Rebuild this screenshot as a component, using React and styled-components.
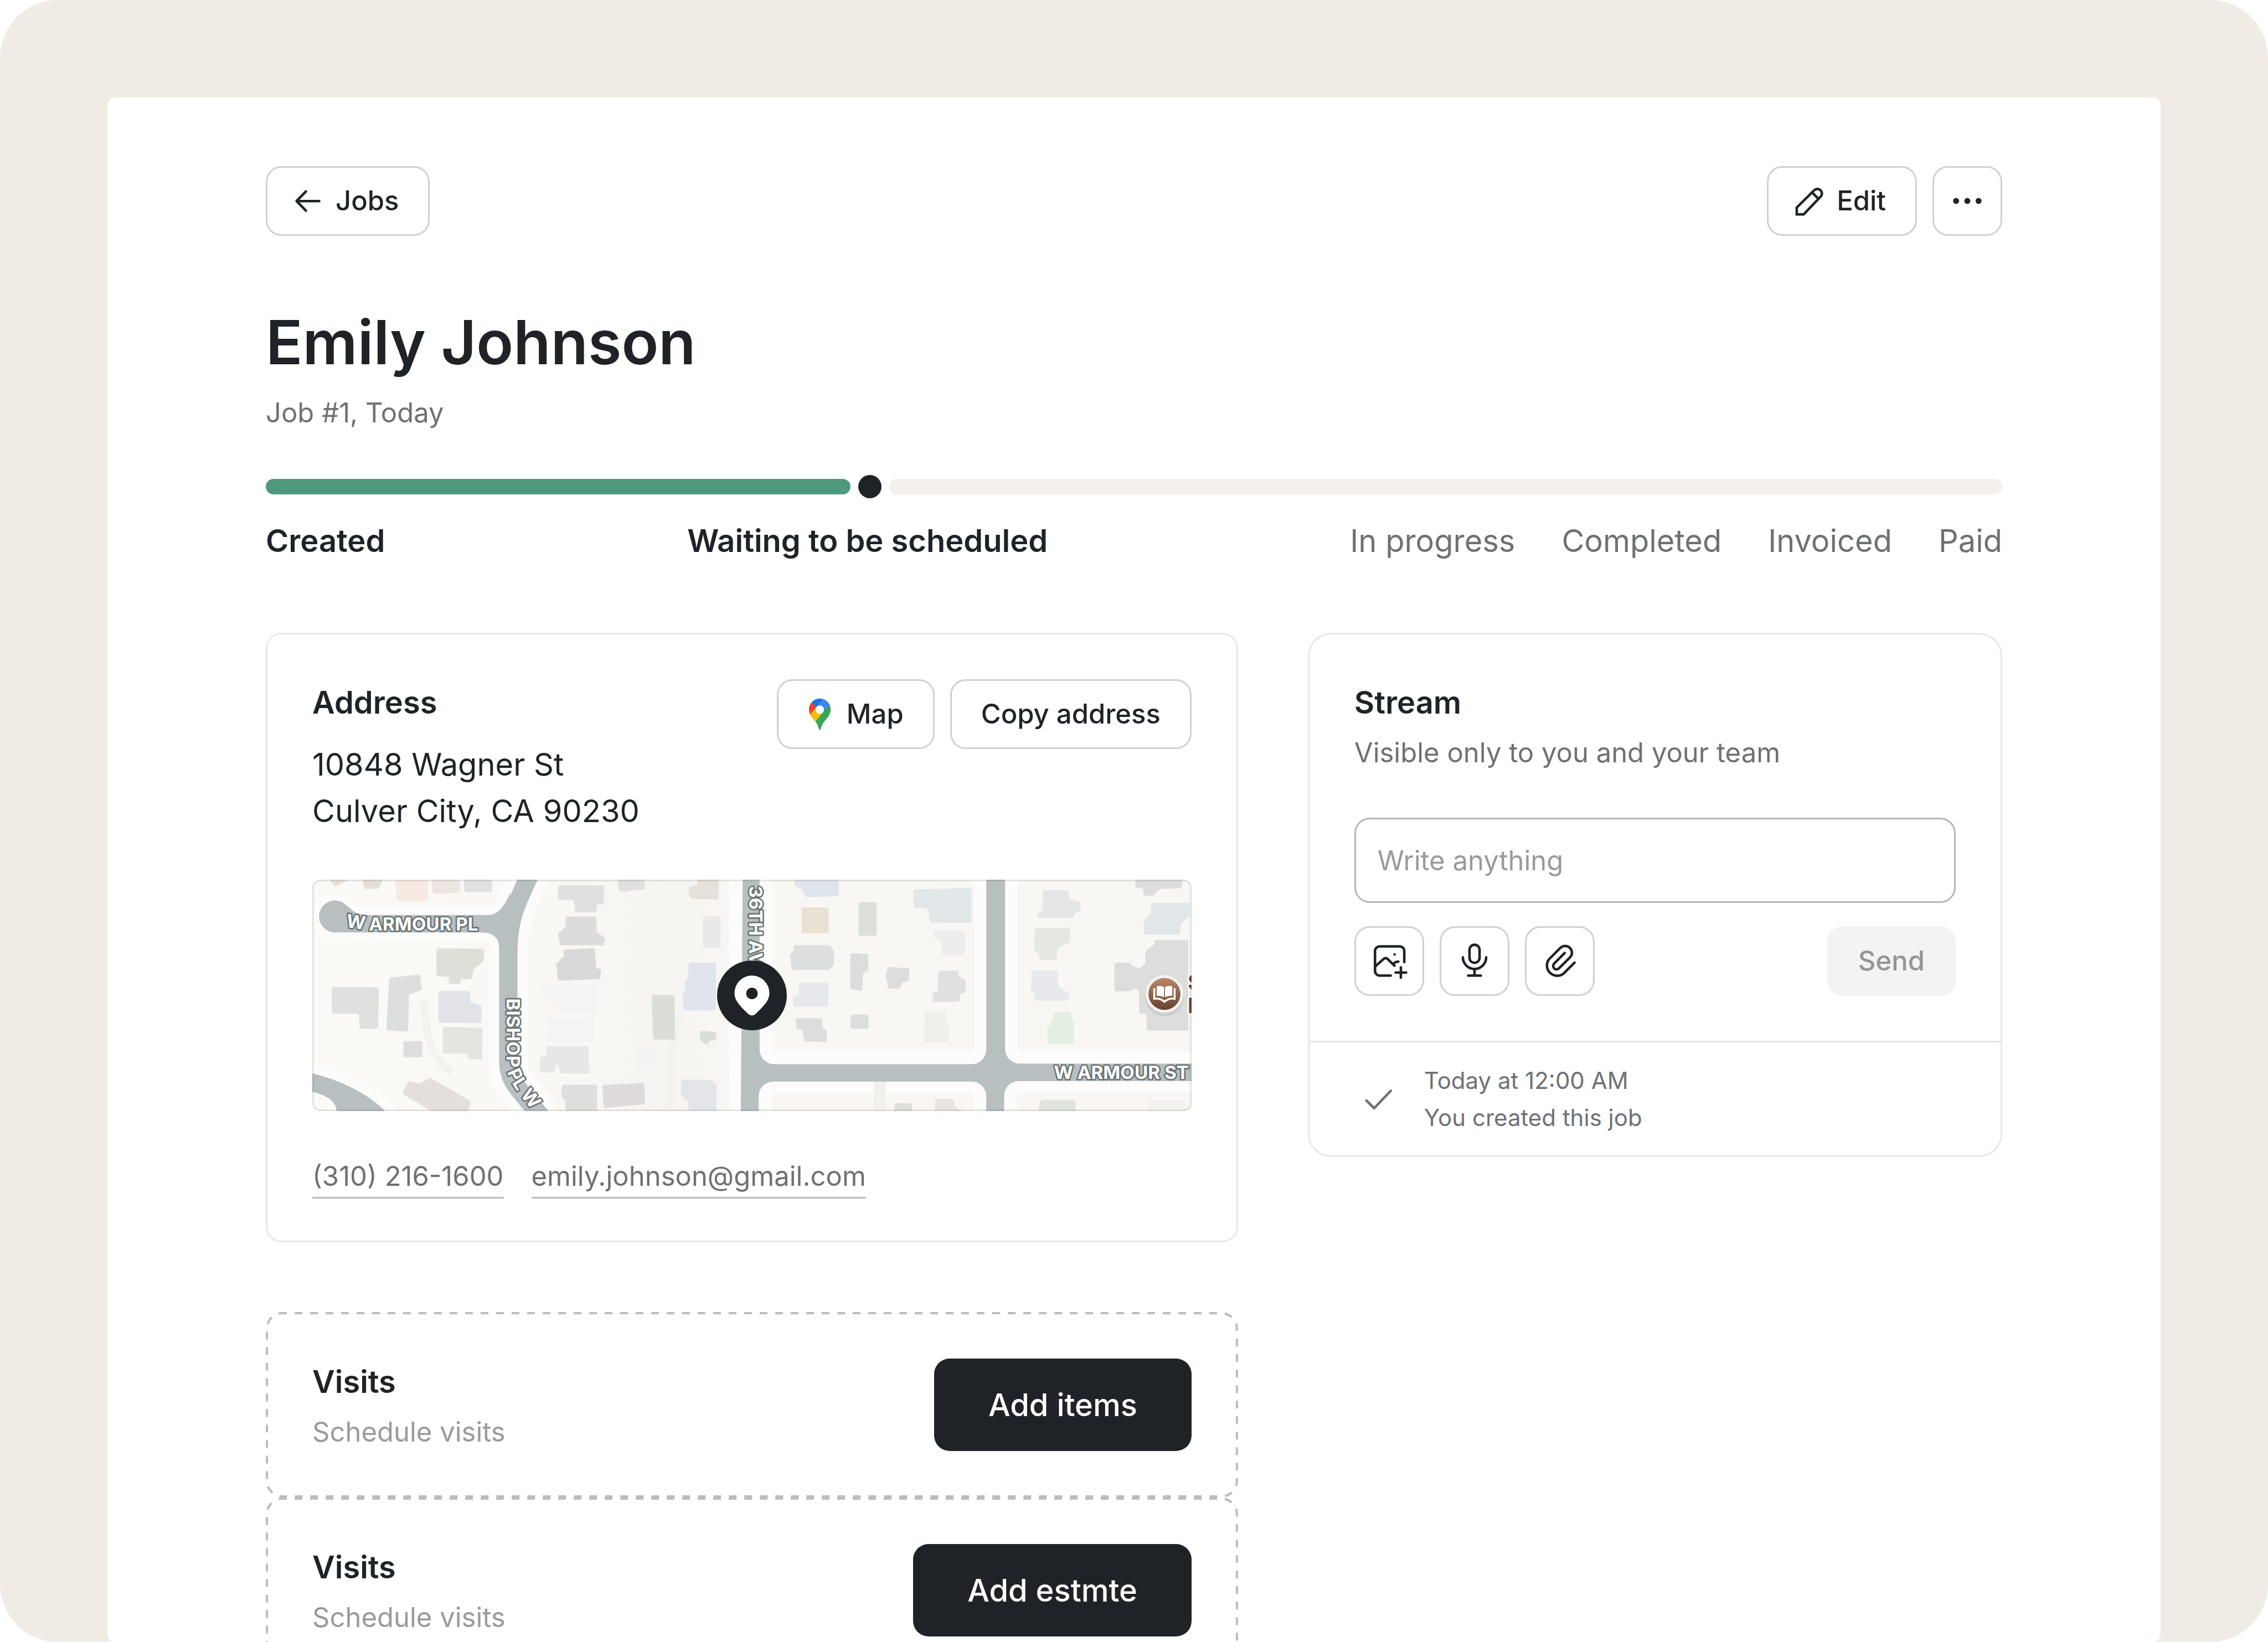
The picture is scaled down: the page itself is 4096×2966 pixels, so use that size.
import React, { useState } from 'react';
import styled, { createGlobalStyle } from 'styled-components';

const GlobalStyle = createGlobalStyle`
  * {
    box-sizing: border-box;
  }

  body {
    margin: 0;
    background: #ffffff;
    color: #1f2227;
    font-family: Inter, "Liberation Sans", sans-serif;
    font-size: 49px;
    line-height: 70px;
  }

  h1, h2, p, address, ol {
    margin: 0;
    padding: 0;
  }

  button, input {
    font: inherit;
    color: inherit;
  }
`;

const Frame = styled.div`
  display: flex;
  height: 100vh;
  padding: 176px 194px 0;
  overflow: hidden;
  background: #f0ebe4;
  border-radius: 105px;
`;

const Panel = styled.main`
  flex: 1;
  min-width: 0;
  padding: 124px 286px 0;
  overflow: hidden;
  background: #ffffff;
  border-radius: 14px;
`;

const Toolbar = styled.div`
  display: flex;
  align-items: center;
  justify-content: space-between;
`;

const Actions = styled.div`
  display: flex;
  gap: 28px;
`;

const Button = styled.button`
  display: flex;
  align-items: center;
  justify-content: center;
  gap: 14px;
  height: 126px;
  padding: 0 53px 0 ${props => (props.$icon ? '39px' : '53px')};
  background: #ffffff;
  border: 3px solid #cfd0d0;
  border-radius: 28px;
  font-weight: 500;
  white-space: nowrap;
  cursor: pointer;
`;

const IconButton = styled(Button)`
  width: 126px;
  padding: 0;
`;

const SendButton = styled(Button)`
  background: #f3f3f3;
  border-color: #f3f3f3;
  color: #959595;
`;

const PrimaryButton = styled.button`
  height: 167px;
  padding: 0 98px;
  background: #1f2227;
  border: 0;
  border-radius: 28px;
  color: #ffffff;
  font-size: 56px;
  font-weight: 500;
  white-space: nowrap;
  cursor: pointer;
`;

const Icon = styled.svg`
  flex: none;
  width: 70px;
  height: 70px;
  fill: none;
  stroke: currentColor;
  stroke-width: 1.3;
  stroke-linecap: round;
  stroke-linejoin: round;
`;

const Title = styled.h1`
  margin-top: 122px;
  font-size: 110px;
  font-weight: 600;
  line-height: 140px;
`;

const Subtitle = styled.p`
  margin-top: 23px;
  color: #6f7074;
`;

const Progress = styled.div`
  display: flex;
  align-items: center;
  gap: 14px;
  margin-top: 77px;
`;

const Bar = styled.div`
  flex: ${props => props.$share} 1 0;
  height: 28px;
  background: ${props => (props.$done ? '#4f9a7c' : '#f4f1ea')};
  border-radius: 14px;
`;

const Dot = styled.div`
  width: 42px;
  height: 42px;
  background: #1f2227;
  border-radius: 50%;
`;

const Steps = styled.ol`
  display: flex;
  justify-content: space-between;
  margin-top: 35px;
  list-style: none;
  font-size: 56px;
  line-height: 84px;
`;

const Step = styled.li`
  display: flex;
  gap: 84px;
  font-weight: ${props => (props.$active ? 600 : 400)};
  color: ${props => (props.$active ? '#1f2227' : '#6f7074')};
`;

const Columns = styled.div`
  display: grid;
  grid-template-columns: 7fr 5fr;
  align-items: start;
  gap: 126px;
  margin-top: 124px;
`;

const Card = styled.section`
  border: 3px solid #e8e8e8;
  border-radius: 28px;
  padding: 81px;
`;

const StreamCard = styled(Card)`
  border-radius: 42px;
  padding: 0;
`;

const CardHeader = styled.div`
  display: flex;
  align-items: flex-start;
  justify-content: space-between;
`;

const CardTitle = styled.h2`
  font-size: 56px;
  font-weight: 600;
  line-height: 84px;
`;

const Address = styled.address`
  margin-top: 28px;
  font-size: 56px;
  font-style: normal;
  line-height: 84px;
`;

const Muted = styled.p`
  margin-top: 14px;
  color: ${props => (props.$light ? '#9a9a9a' : '#6f7074')};
`;

const MapBox = styled.div`
  position: relative;
  height: 418px;
  margin-top: 82px;
  overflow: hidden;
  border-radius: 14px;

  &::after {
    content: "";
    position: absolute;
    inset: 0;
    border: 3px solid rgba(60, 60, 50, 0.12);
    border-radius: 14px;
  }
`;

const MapSvg = styled.svg`
  display: block;
  width: 100%;
  height: 100%;
`;

const Marker = styled.svg`
  position: absolute;
  top: 50%;
  left: 50%;
  width: 126px;
  height: 126px;
  transform: translate(-50%, -50%);
`;

const RoadLabel = styled.text`
  fill: #ffffff;
  stroke: #6a7376;
  stroke-width: 6;
  stroke-linejoin: round;
  paint-order: stroke;
  font-size: 38px;
  font-weight: 700;
`;

const PlaceLabel = styled(RoadLabel)`
  fill: #6b4138;
  stroke: #ffffff;
  font-size: 44px;
`;

const Contacts = styled.p`
  margin-top: 83px;
`;

const ContactLink = styled.a`
  margin-right: 50px;
  padding-bottom: 8px;
  border-bottom: 3px solid #b9b9b9;
  color: #6f7074;
  text-decoration: none;
`;

const Todos = styled.div`
  margin-top: 126px;
`;

const TodoCard = styled.section`
  position: relative;
  display: flex;
  align-items: flex-start;
  justify-content: space-between;
  height: 335px;
  padding: 84px;
`;

const Dashes = styled.svg`
  position: absolute;
  inset: 0;
  width: 100%;
  height: 100%;
  padding: 2px;
  overflow: visible;
  pointer-events: none;

  rect {
    width: 100%;
    height: 100%;
    fill: none;
    stroke: #bcbcbc;
    stroke-width: 4;
    stroke-dasharray: 14 14;
    stroke-dashoffset: 6;
  }
`;

const Composer = styled.form`
  padding: 81px;
`;

const Field = styled.input`
  display: block;
  width: 100%;
  height: 154px;
  margin-top: 82px;
  padding: 0 39px;
  background: #ffffff;
  border: 3px solid #b5b5b5;
  border-radius: 28px;

  &::placeholder {
    color: #9a9a9a;
    opacity: 1;
  }
`;

const ComposerActions = styled.div`
  display: flex;
  justify-content: space-between;
  margin-top: 42px;
`;

const StreamItem = styled.div`
  display: flex;
  align-items: center;
  gap: 42px;
  padding: 35px 81px;
  border-top: 3px solid #e3e3e3;
  color: #6f7074;
  font-size: 42px;
  line-height: 67px;
`;

const CheckIcon = styled(Icon)`
  width: 84px;
  height: 84px;
`;

const ArrowIcon = () => (
  <Icon viewBox="0 0 20 20" aria-hidden="true">
    <path d="M15.6 10.05H3.9M8.7 5.1L3.9 10.05L8.7 15" />
  </Icon>
);

const PencilIcon = () => (
  <Icon viewBox="0 0 20 20" aria-hidden="true">
    <path d="M3.4 16.9V13.4L12.4 4.5A2.33 2.33 0 0 1 15.7 7.8L7 16.9Z" strokeLinejoin="miter" />
    <path d="M11.3 5.6L14.6 8.9" />
  </Icon>
);

const MoreIcon = () => (
  <Icon viewBox="0 0 20 20" aria-hidden="true">
    <g fill="currentColor" stroke="none">
      <circle cx="4.2" cy="10" r="1.55" />
      <circle cx="10" cy="10" r="1.55" />
      <circle cx="15.8" cy="10" r="1.55" />
    </g>
  </Icon>
);

const ImageIcon = () => (
  <Icon viewBox="0 0 20 20" aria-hidden="true">
    <path d="M10.75 17.5H5.1A2.45 2.45 0 0 1 2.65 15.05V4.85A2.45 2.45 0 0 1 5.1 2.4H15.3A2.45 2.45 0 0 1 17.75 4.85V10.5" />
    <path d="M2.65 12.9L7.1 8.9Q8.1 8 9.1 8.9L12.7 12.4" />
    <path d="M12 11.7Q13 10.3 14.7 10.3" />
    <path d="M16 13.2V18.6M13.3 15.9H18.7" />
    <circle cx="12.75" cy="6.6" r="0.65" fill="currentColor" stroke="none" />
  </Icon>
);

const MicIcon = () => (
  <Icon viewBox="0 0 20 20" aria-hidden="true">
    <rect x="7.4" y="1.6" width="5.2" height="9.3" rx="2.6" />
    <path d="M4 8.1A6 6 0 0 0 16 8.1M10 14.1V17.5M6.7 17.5H13.3" />
  </Icon>
);

const ClipIcon = () => (
  <Icon viewBox="0 0 20 20" aria-hidden="true">
    <path d="M17.6 10.8L12 16.4A5.3 5.3 0 0 1 4.5 9L10.3 3.2A3.5 3.5 0 0 1 15.2 8.2L9.4 13.9A1.75 1.75 0 0 1 6.9 11.5L12.5 5.8" />
  </Icon>
);

const GooglePin = () => (
  <Icon viewBox="50 58 240 240" aria-hidden="true">
    <clipPath id="gpin">
      <path d="M172 82A67 67 0 0 1 239 149C239 172 228 190 214 207C200 222 187 238 180 262C177 272 176 276 172 276C168 276 167 272 164 262C158 243 150 231 140 217C124 198 105 178 105 149A67 67 0 0 1 172 82Z" />
    </clipPath>
    <g clipPath="url(#gpin)" stroke="none">
      <path fill="#34a853" d="M90 70H260V290H90Z" />
      <path fill="#fbbc04" d="M90 207L152 133L191 168L144 224L90 288Z" />
      <path fill="#ea4335" d="M80 72L152 133L90 207Z" />
      <path fill="#1a73e8" d="M80 72H200L152 133Z" />
      <path fill="#4285f4" d="M200 76H269L191 168L152 133Z" />
    </g>
    <circle cx="172" cy="150" r="26" fill="#ffffff" stroke="none" />
  </Icon>
);

const westBuildings = [
  ['#e8e2d6', '92,60 142,60 104,98'],
  ['#e5dfd8', '198,50 255,50 240,112 204,112'],
  ['#f6eae1', '304,50 398,50 396,188 312,188'],
  ['#ede5e0', '423,50 501,50 501,138 426,142'],
  ['#e1e1e1', '527,50 605,50 605,133 530,133'],
  ['#dfded9', '439,510 578,512 578,570 545,620 541,674 503,676 503,704 479,704 479,662 439,655'],
  ['#dcdfdb', '286,692 372,675 377,745 336,775 333,1000 277,995'],
  ['#e0e0e1', '100,750 239,752 236,983 190,983 188,905 178,890 100,890'],
  ['#e1e3e8', '445,775 533,775 536,840 571,865 571,948 445,945'],
  ['#e5e4e0', '460,1000 574,1004 572,1174 540,1172 536,1138 460,1138'],
  ['#dededd', '332,1087 379,1087 379,1159 332,1159'],
  ['#e4dfdc', '345,1338 378,1352 412,1318 535,1455 525,1520 430,1510 330,1395'],
  ['#e1e0df', '833,118 967,118 967,208 945,210 943,258 887,258 885,200 875,182 833,180'],
  ['#dcdcdb', '858,312 942,312 944,400 970,440 968,464 838,464 833,410 858,365'],
  ['#dad9d9', '850,518 938,510 942,625 958,640 956,675 832,684 827,600 852,550'],
  ['#f4f4f2', '778,730 950,735 946,890 838,885 832,820 785,815'],
  ['#f4f4f2', '803,940 938,940 936,1070 796,1070'],
  ['#e7e7e5', '795,1118 918,1118 920,1262 838,1262 834,1210 810,1210 808,1255 773,1255 773,1185 795,1180'],
  ['#dededc', '845,1358 945,1358 945,1520 858,1520 855,1430 843,1415'],
  ['#dfdadb', '976,1360 1098,1348 1100,1455 980,1475'],
  ['#e0e0e0', '1024,50 1099,50 1099,118 1062,120 1055,130 1030,128'],
  ['#e6e0da', '1285,50 1339,50 1338,178 1262,176 1254,150 1256,125 1282,115'],
  ['#e9e9e9', '1302,312 1345,312 1344,480 1302,480'],
  ['#e0e4ec', '1255,600 1329,600 1329,868 1238,870 1236,775 1244,770 1244,705 1252,700'],
  ['#dbddd9', '1136,800 1195,800 1198,1050 1140,1050'],
  ['#dbddd9', '1292,1025 1330,1030 1330,1055 1310,1060 1306,1080 1292,1060'],
  ['#f3f3f2', '1086,1135 1133,1135 1133,1237 1086,1230'],
  ['#e3e5e8', '1232,1325 1320,1330 1331,1350 1331,1520 1255,1520 1252,1440 1230,1400'],
];

const eastBuildings = [
  ['#dde4eb', '235,50 363,50 363,158 268,164 258,120 235,95'],
  ['#eae1d5', '257,255 331,255 331,388 257,388'],
  ['#dddfdb', '442,222 486,222 486,404 442,404'],
  ['#e2e7e9', '620,143 793,135 793,324 672,326 665,250 650,232 620,232'],
  ['#ededeb', '686,400 770,400 776,470 768,527 712,525 705,430 686,420'],
  ['#dddee0', '232,490 338,490 348,520 348,595 335,618 225,618 220,540 232,520'],
  ['#dbdfdb', '415,540 459,545 459,625 443,640 440,745 415,740'],
  ['#dddddc', '535,628 592,632 590,690 570,700 563,735 537,732 530,670'],
  ['#e0e0e1', '700,650 750,650 752,680 775,700 774,760 758,775 755,815 682,815 682,785 698,770'],
  ['#e6e8ec', '250,725 330,725 330,848 230,846 228,805 248,795'],
  ['#dddddc', '238,945 310,945 313,1010 325,1015 324,1064 266,1062 260,1000 240,985'],
  ['#dbdfdb', '416,922 460,922 460,984 416,984'],
  ['#efefeb', '655,902 710,902 715,980 722,990 718,1068 653,1068'],
  ['#e5e6e8', '1038,147 1107,147 1112,200 1146,220 1146,258 1126,265 1125,293 1022,295 1022,285 1038,270'],
  ['#e5e7e2', '1012,385 1112,380 1112,450 1072,490 1068,556 1028,555 1022,510 1010,505'],
  ['#e7e9ec', '1002,645 1072,645 1074,740 1110,785 1105,808 1012,808 1010,765 1000,755'],
  ['#e2efe2', '1075,905 1115,905 1118,945 1125,955 1125,1078 1055,1078 1052,1000 1062,985'],
  ['#dddddc', '1338,50 1477,50 1474,110 1408,112 1385,155 1364,155 1362,112 1338,105'],
  ['#e1e6e8', '1390,227 1500,227 1500,290 1472,330 1468,398 1365,398 1365,330 1388,290'],
  ['#dddddb', '1400,458 1495,460 1495,995 1375,995 1372,895 1350,890 1350,765 1335,730 1310,750 1270,750 1270,600 1310,600 1318,620 1345,635 1370,600 1370,520 1398,480'],
  ['#e1e3de', '1030,1452 1130,1452 1130,1540 1020,1540'],
  ['#f1f1f0', '1382,1455 1485,1455 1488,1540 1380,1540'],
  ['#dfdfde', '558,1475 600,1475 602,1540 558,1540'],
  ['#e9e4e1', '690,1448 735,1448 740,1490 765,1520 690,1520'],
];

const Buildings = ({ list, transform }) => (
  <g transform={transform}>
    {list.map(([color, points]) => (
      <polygon
        key={points}
        points={points}
        fill={color}
        stroke={color}
        strokeWidth="8"
        strokeLinejoin="round"
        vectorEffect="non-scaling-stroke"
      />
    ))}
  </g>
);

const bishop = 'M452 -10C428 45 408 75 408 150V375C408 420 430 430 476 490';

const StreetMap = () => (
  <MapSvg viewBox="0 0 1822 478" preserveAspectRatio="xMidYMid slice" role="img" aria-label="Map of the address">
    <defs>
      <linearGradient id="poi" x1="0" y1="0" x2="0" y2="1">
        <stop offset="0" stopColor="#bd8765" />
        <stop offset="1" stopColor="#654330" />
      </linearGradient>
      <linearGradient id="ground" x1="0" y1="0" x2="1" y2="0">
        <stop offset="0" stopColor="#fbfaf6" />
        <stop offset="0.65" stopColor="#f8f7f3" />
        <stop offset="0.8" stopColor="#f5f4f0" />
        <stop offset="1" stopColor="#f8f7f3" />
      </linearGradient>
      <path id="bishop-label" d="M404 245V385C405 410 425 440 475 496" />
    </defs>

    <rect width="900" height="478" fill="url(#ground)" />
    <g fill="none" stroke="#f3f2ee" strokeWidth="16">
      <path d="M235 250C235 330 250 365 290 400" />
      <path d="M760 280C745 340 735 400 742 480" />
    </g>
    <g fill="none" stroke="#fcfcfa">
      <path d={bishop} strokeWidth="82" />
      <path d="M50 90H408" strokeWidth="66" />
      <circle cx="50" cy="76" r="48" fill="#fcfcfa" stroke="none" />
      <path d="M-5 395C50 408 122 440 160 484" strokeWidth="36" />
    </g>
    <rect x="864" width="40" height="478" fill="#fcfcfa" />

    <g fill="#b7bfc1">
      <path d={bishop} fill="none" stroke="#b7bfc1" strokeWidth="38" />
      <path d="M50 73H408V109H50Z" />
      <circle cx="50" cy="76" r="33" />
      <path d="M76 54Q92 73 116 73V90H60Z" />
      <path d="M368 73Q392 73 412 28L430 90H368Z" />
      <path d="M352 109Q389 109 389 142H410V90H352Z" />
      <path d="M-2 399C50 410 120 440 155 480H53C53 455 30 445 -2 437Z" />
      <path d="M892 0H1822V478H888Z" />
    </g>
    <path d="M-2 437C30 445 53 455 53 480H-2Z" fill="#fbfbf9" />

    <g fill="#fcfcfa">
      <rect x="927" y="-60" width="468" height="441" rx="30" />
      <rect x="1434" y="-60" width="460" height="440" rx="30" />
      <rect x="925" y="417" width="470" height="120" rx="30" />
      <rect x="1432" y="416" width="460" height="120" rx="30" />
    </g>
    <g fill="#f8f7f3">
      <rect x="953" y="-40" width="418" height="394" rx="12" />
      <rect x="1460" y="-40" width="420" height="394" rx="12" />
      <rect x="951" y="439" width="418" height="80" rx="12" />
      <rect x="1458" y="438" width="420" height="80" rx="12" />
    </g>
    <rect x="1163" y="418" width="24" height="60" fill="#f1f0ec" />

    <Buildings list={westBuildings} transform="translate(-16 -23) scale(0.638 0.332)" />
    <Buildings list={eastBuildings} transform="translate(854 -23) scale(0.638 0.332)" />

    <RoadLabel transform="translate(72 98) rotate(8)">W</RoadLabel>
    <RoadLabel x="120" y="105">ARMOUR PL</RoadLabel>
    <RoadLabel x="1674" y="412" textAnchor="middle">W ARMOUR ST</RoadLabel>
    <RoadLabel transform="translate(905 13) rotate(90)">36TH AVE</RoadLabel>
    <RoadLabel>
      <textPath href="#bishop-label">BISHOP PL W</textPath>
    </RoadLabel>

    <circle cx="1763" cy="242" r="40" fill="#000000" opacity="0.08" />
    <circle cx="1763" cy="236" r="39" fill="#f3f2f1" />
    <circle cx="1763" cy="236" r="33" fill="url(#poi)" />
    <path d="M1747 220Q1756 218 1762 222V243Q1755 239 1747 240ZM1779 220Q1770 218 1764 222V243Q1771 239 1779 240Z" fill="#ffffff" />
    <path d="M1742 224V246Q1754 244 1763 252Q1772 244 1784 246V224" fill="none" stroke="#ffffff" strokeWidth="4" />
    <PlaceLabel x="1811" y="227">S</PlaceLabel>
    <PlaceLabel x="1811" y="276">E</PlaceLabel>
  </MapSvg>
);

const steps = [
  { labels: ['Created'], active: true },
  { labels: ['Waiting to be scheduled'], active: true },
  { labels: ['In progress', 'Completed', 'Invoiced', 'Paid'], active: false },
];

const todos = [
  { id: 1, title: 'Visits', text: 'Schedule visits', action: 'Add items' },
  { id: 2, title: 'Visits', text: 'Schedule visits', action: 'Add estmte' },
];

const App = () => {
  const [note, setNote] = useState('');

  return (
    <>
      <GlobalStyle />
      <Frame>
        <Panel>
          <Toolbar>
            <Button type="button" $icon>
              <ArrowIcon />
              Jobs
            </Button>
            <Actions>
              <Button type="button" $icon>
                <PencilIcon />
                Edit
              </Button>
              <IconButton type="button" aria-label="More">
                <MoreIcon />
              </IconButton>
            </Actions>
          </Toolbar>

          <Title>Emily Johnson</Title>
          <Subtitle>Job #1, Today</Subtitle>

          <Progress>
            <Bar $done $share={1056} />
            <Dot />
            <Bar $share={2011} />
          </Progress>
          <Steps>
            {steps.map(step => (
              <Step key={step.labels[0]} $active={step.active}>
                {step.labels.map(label => (
                  <span key={label}>{label}</span>
                ))}
              </Step>
            ))}
          </Steps>

          <Columns>
            <div>
              <Card>
                <CardHeader>
                  <div>
                    <CardTitle>Address</CardTitle>
                    <Address>
                      10848 Wagner St
                      <br />
                      Culver City, CA 90230
                    </Address>
                  </div>
                  <Actions>
                    <Button type="button" $icon>
                      <GooglePin />
                      Map
                    </Button>
                    <Button type="button">Copy address</Button>
                  </Actions>
                </CardHeader>
                <MapBox>
                  <StreetMap />
                  <Marker viewBox="0 0 144 144" aria-hidden="true">
                    <circle cx="72" cy="72" r="72" fill="#1f2227" />
                    <path d="M72 31C92 31 108 47 108 68C108 84 93 97 80 110Q72 117 64 110C51 97 36 84 36 68C36 47 52 31 72 31Z" fill="#ffffff" />
                    <circle cx="72" cy="68" r="12" fill="#1f2227" />
                  </Marker>
                </MapBox>
                <Contacts>
                  <ContactLink href="tel:+13102161600">(310) 216-1600</ContactLink>
                  <ContactLink href="mailto:emily.johnson@gmail.com">emily.johnson@gmail.com</ContactLink>
                </Contacts>
              </Card>

              <Todos>
                {todos.map(todo => (
                  <TodoCard key={todo.id}>
                    <Dashes aria-hidden="true">
                      <rect rx="28" />
                    </Dashes>
                    <div>
                      <CardTitle>{todo.title}</CardTitle>
                      <Muted $light>{todo.text}</Muted>
                    </div>
                    <PrimaryButton type="button">{todo.action}</PrimaryButton>
                  </TodoCard>
                ))}
              </Todos>
            </div>

            <StreamCard>
              <Composer onSubmit={e => e.preventDefault()}>
                <CardTitle>Stream</CardTitle>
                <Muted>Visible only to you and your team</Muted>
                <Field
                  type="text"
                  aria-label="Note"
                  placeholder="Write anything"
                  value={note}
                  onChange={e => setNote(e.target.value)}
                />
                <ComposerActions>
                  <Actions>
                    <IconButton type="button" aria-label="Add image">
                      <ImageIcon />
                    </IconButton>
                    <IconButton type="button" aria-label="Record audio">
                      <MicIcon />
                    </IconButton>
                    <IconButton type="button" aria-label="Attach file">
                      <ClipIcon />
                    </IconButton>
                  </Actions>
                  <SendButton type="submit" disabled={!note}>
                    Send
                  </SendButton>
                </ComposerActions>
              </Composer>
              <StreamItem>
                <CheckIcon viewBox="0 0 24 24" aria-hidden="true">
                  <path d="M6.2 12.8L10.2 16.8L18.8 7.8" />
                </CheckIcon>
                <div>
                  <p>Today at 12:00 AM</p>
                  <p>You created this job</p>
                </div>
              </StreamItem>
            </StreamCard>
          </Columns>
        </Panel>
      </Frame>
    </>
  );
};

export default App;
